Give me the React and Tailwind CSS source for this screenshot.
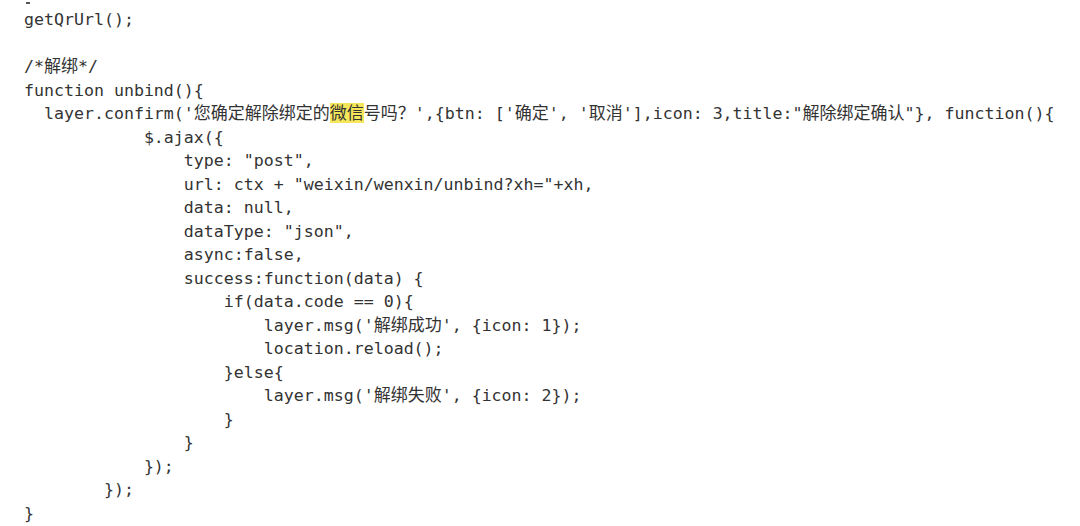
import React from 'react';

const lines = [
  'getQrUrl();',
  '',
  '/*解绑*/',
  'function unbind(){',
  null, // confirm line, built by hand for the highlight
  '            $.ajax({',
  '                type: "post",',
  '                url: ctx + "weixin/wenxin/unbind?xh="+xh,',
  '                data: null,',
  '                dataType: "json",',
  '                async:false,',
  '                success:function(data) {',
  '                    if(data.code == 0){',
  "                        layer.msg('解绑成功', {icon: 1});",
  '                        location.reload();',
  '                    }else{',
  "                        layer.msg('解绑失败', {icon: 2});",
  '                    }',
  '                }',
  '            });',
  '        });',
  '}',
];

// CJK glyphs get a slightly larger cell so they line up like the source editor
const Segments = ({ text }) => {
  const parts = text.split(/([\u3000-\u9fff\uff00-\uffef]+)/);
  return parts.map((part, i) =>
    i % 2 === 1 ? (
      <span key={i} className="text-[17px]">{part}</span>
    ) : (
      <React.Fragment key={i}>{part}</React.Fragment>
    )
  );
};

const ConfirmLine = () => (
  <div className="h-[23.5px] leading-[23.5px] whitespace-pre">
    <Segments text="  layer.confirm('您确定解除绑定的" />
    <span className="text-[17px] bg-[#f6e65a]">微信</span>
    <Segments text={"号吗？',{btn: ['确定', '取消'],icon: 3,title:\"解除绑定确认\"}, function(){"} />
  </div>
);

export default function App() {
  return (
    <div className="w-[1080px] h-[526px] overflow-hidden bg-white text-[#333333] pl-[24px] font-['DejaVu_Sans_Mono','Noto_Sans_CJK_SC',monospace] text-[16.6px]">
      {/* cut-off tail of the line above */}
      <div className="mt-[2px] ml-[2px] w-[4px] h-[2px] bg-[#555555]" />
      <div className="mt-[4px]">
        {lines.map((line, i) =>
          line === null ? (
            <ConfirmLine key={i} />
          ) : (
            <div key={i} className="h-[23.5px] leading-[23.5px] whitespace-pre">
              <Segments text={line} />
            </div>
          )
        )}
      </div>
    </div>
  );
}
